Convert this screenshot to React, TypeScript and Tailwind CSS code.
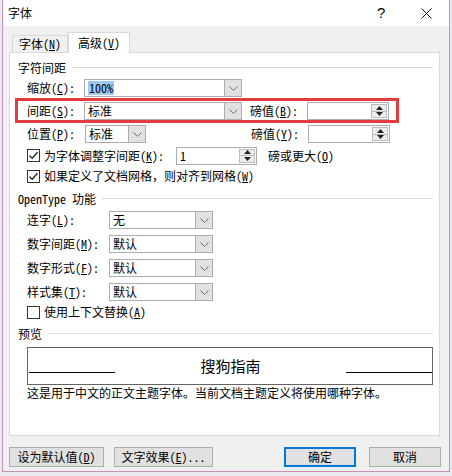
import React from "react";

const Chevron = () => (
  <svg width="9" height="5" viewBox="0 0 9 5">
    <path d="M0.5 0.5 L4.5 4.5 L8.5 0.5" stroke="#707070" strokeWidth="1" fill="none" />
  </svg>
);

function Combo({ w, value, sel }: { w: string; value: string; sel?: boolean }) {
  return (
    <div className={`${w} h-[18px] flex border border-[#adadad] bg-white`}>
      <div className="flex-1 flex items-center pl-[3px] overflow-hidden">
        {sel ? <span className="bg-[#9ccaf3] leading-[14px] px-[1px]">{value}</span> : <span className="leading-[14px]">{value}</span>}
      </div>
      <div className="w-[17px] bg-[#e1e1e1] border-l border-[#adadad] flex items-center justify-center">
        <Chevron />
      </div>
    </div>
  );
}

function Spin({ w, value }: { w: string; value?: string }) {
  return (
    <div className={`${w} h-[18px] flex border border-[#adadad] bg-white`}>
      <div className="flex-1 flex items-center pl-[3px] leading-[14px]">{value}</div>
      <div className="w-[16px] my-[1px] mr-[1px] flex flex-col border border-[#bdbdbd] bg-[#ececec]">
        <div className="flex-1 flex items-center justify-center border-b border-[#bdbdbd]">
          <svg width="7" height="4" viewBox="0 0 7 4"><path d="M0 4 L3.5 0 L7 4 Z" fill="#222" /></svg>
        </div>
        <div className="flex-1 flex items-center justify-center">
          <svg width="7" height="4" viewBox="0 0 7 4"><path d="M0 0 L3.5 4 L7 0 Z" fill="#222" /></svg>
        </div>
      </div>
    </div>
  );
}

function Check({ checked }: { checked?: boolean }) {
  return (
    <div className="w-[13px] h-[13px] border border-[#333] bg-white flex items-center justify-center shrink-0">
      {checked && (
        <svg width="11" height="11" viewBox="0 0 11 11">
          <path d="M1.5 5.5 L4.2 8.3 L9.5 2.2" stroke="#222" strokeWidth="1.3" fill="none" />
        </svg>
      )}
    </div>
  );
}

function Header({ text, mt }: { text: string; mt: string }) {
  return (
    <div className={`${mt} h-[16px] flex items-center pl-[8px] pr-[6px]`}>
      <span className="leading-[16px]">{text}</span>
      <div className="flex-1 h-px bg-[#dcdcdc] ml-[6px] -translate-y-[1px]" />
    </div>
  );
}

function Lbl({ t, k, rest }: { t: string; k: string; rest?: string }) {
  return (
    <span className="leading-[14px] whitespace-nowrap">
      {t}(<u>{k}</u>){rest ?? ":"}
    </span>
  );
}

export default function App() {
  return (
    <div className="w-[452px] h-[476px] bg-[#e9ebef] relative overflow-hidden font-['Noto_Sans_Mono_CJK_SC','Noto_Sans_CJK_SC',sans-serif] text-[12px] text-black">
      <div className="ml-[2px] w-[448px] h-[472px] border-x border-b border-[#c98fb6] bg-[#f0f0f0] flex flex-col">
        {/* title bar */}
        <div className="h-[26px] bg-white flex items-center relative">
          <span className="ml-[5px] text-[12px] leading-[14px]">字体</span>
          <span className="absolute left-[374px] top-[5px] text-[15px] leading-[16px] font-['Liberation_Sans',sans-serif]">?</span>
          <svg className="absolute left-[418px] top-[8px]" width="11" height="11" viewBox="0 0 11 11">
            <path d="M0.5 0.5 L10.5 10.5 M10.5 0.5 L0.5 10.5" stroke="#111" strokeWidth="1" />
          </svg>
        </div>
        {/* tabs */}
        <div className="mt-[6px] h-[20px] flex items-end pl-[9px] relative z-10">
          <div className="w-[56px] h-[17px] border border-b-0 border-[#d9d9d9] bg-[#f0f0f0] flex items-center justify-center">
            <Lbl t="字体" k="N" rest="" />
          </div>
          <div className="w-[62px] h-[21px] -mb-[1px] border border-b-0 border-[#d9d9d9] bg-white flex items-center justify-center pb-[1px]">
            <Lbl t="高级" k="V" rest="" />
          </div>
        </div>
        {/* panel */}
        <div className="ml-[6px] w-[431px] h-[384px] border border-[#d9d9d9] bg-white flex flex-col">
          <Header text="字符间距" mt="mt-[7px]" />
          <div className="mt-[3px] h-[18px] flex items-center pl-[17px]">
            <div className="w-[57px]"><Lbl t="缩放" k="C" /></div>
            <Combo w="w-[158px]" value="100%" sel />
          </div>
          <div className="mt-[1px] ml-[5px] w-[384px] h-[25px] border-[3px] border-[#e23c3e] pl-[9px] pt-[1px] flex items-start">
            <div className="w-[57px] h-[18px] flex items-center"><Lbl t="间距" k="S" /></div>
            <Combo w="w-[158px]" value="标准" />
            <div className="ml-[8px] w-[57px] h-[18px] flex items-center"><Lbl t="磅值" k="B" /></div>
            <Spin w="w-[82px]" />
          </div>
          <div className="mt-[2px] h-[18px] flex items-center pl-[17px]">
            <div className="w-[58px]"><Lbl t="位置" k="P" /></div>
            <Combo w="w-[61px]" value="标准" />
            <div className="ml-[105px] w-[57px]"><Lbl t="磅值" k="Y" /></div>
            <Spin w="w-[82px]" />
          </div>
          <div className="mt-[4px] h-[17px] flex items-center pl-[17px]">
            <Check checked />
            <div className="ml-[4px] w-[132px]"><Lbl t="为字体调整字间距" k="K" /></div>
            <Spin w="w-[81px]" value="1" />
            <div className="ml-[11px]"><Lbl t="磅或更大" k="O" rest="" /></div>
          </div>
          <div className="mt-[5px] h-[14px] flex items-center pl-[17px]">
            <Check checked />
            <div className="ml-[4px]"><Lbl t="如果定义了文档网格，则对齐到网格" k="W" rest="" /></div>
          </div>
          <Header text="OpenType 功能" mt="mt-[8px]" />
          <div className="mt-[4px] h-[18px] flex items-center pl-[17px]">
            <div className="w-[82px]"><Lbl t="连字" k="L" /></div>
            <Combo w="w-[104px]" value="无" />
          </div>
          <div className="mt-[6px] h-[18px] flex items-center pl-[17px]">
            <div className="w-[82px]"><Lbl t="数字间距" k="M" /></div>
            <Combo w="w-[104px]" value="默认" />
          </div>
          <div className="mt-[6px] h-[18px] flex items-center pl-[17px]">
            <div className="w-[82px]"><Lbl t="数字形式" k="F" /></div>
            <Combo w="w-[104px]" value="默认" />
          </div>
          <div className="mt-[6px] h-[18px] flex items-center pl-[17px]">
            <div className="w-[82px]"><Lbl t="样式集" k="T" /></div>
            <Combo w="w-[104px]" value="默认" />
          </div>
          <div className="mt-[4px] h-[14px] flex items-center pl-[17px]">
            <Check />
            <div className="ml-[4px]"><Lbl t="使用上下文替换" k="A" rest="" /></div>
          </div>
          <Header text="预览" mt="mt-[7px]" />
          <div className="mt-[5px] ml-[17px] w-[406px] h-[38px] border border-[#646464] flex pl-[1px]">
            <div className="w-[86px]"><div className="mt-[24px] h-px bg-black" /></div>
            <div className="flex-1 text-center text-[15px] leading-[18px] pt-[9px] font-['Noto_Sans_CJK_SC',sans-serif]">搜狗指南</div>
            <div className="w-[86px]"><div className="mt-[24px] h-px bg-black" /></div>
          </div>
          <div className="mt-[1px] h-[14px] pl-[17px] leading-[14px]">
            这是用于中文的正文主题字体。当前文档主题定义将使用哪种字体。
          </div>
        </div>
        {/* buttons */}
        <div className="mt-[11px] h-[20px] flex pl-[6px]">
          <div className="w-[95px] h-[20px] bg-[#e1e1e1] border border-[#adadad] flex items-center justify-center">
            <Lbl t="设为默认值" k="D" rest="" />
          </div>
          <div className="ml-[10px] w-[99px] h-[20px] bg-[#e1e1e1] border border-[#adadad] flex items-center justify-center">
            <Lbl t="文字效果" k="E" rest="..." />
          </div>
          <div className="ml-[71px] w-[72px] h-[20px] bg-[#e1e1e1] border-2 border-[#0078d7] flex items-center justify-center">
            确定
          </div>
          <div className="ml-[13px] w-[72px] h-[20px] bg-[#e1e1e1] border border-[#adadad] flex items-center justify-center">
            取消
          </div>
        </div>
      </div>
    </div>
  );
}
